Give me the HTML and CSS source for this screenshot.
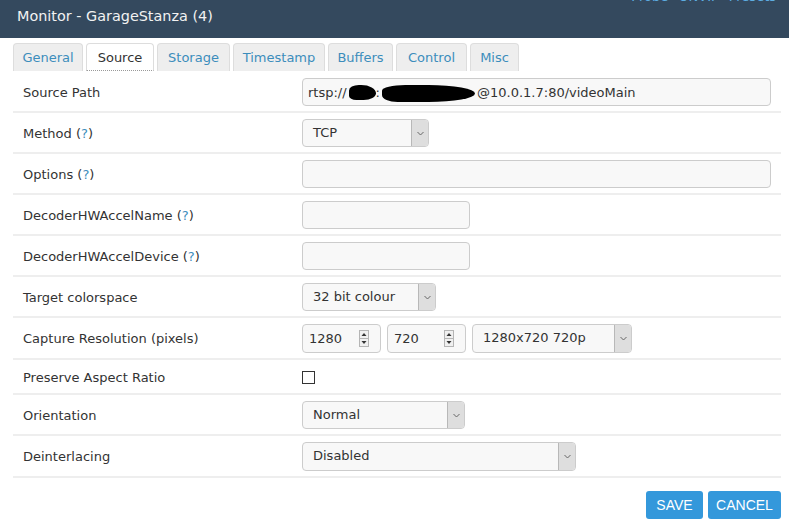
FILE: index.html
```html
<!DOCTYPE html>
<html>
<head>
<meta charset="utf-8">
<link rel="stylesheet" href="styles.css">
</head>
<body>
<div class="header">
  <div class="title">Monitor - GarageStanza (4)</div>
  <div class="links"><a>Probe</a> <a>ONVIF</a> <a>Presets</a></div>
</div>
<div class="tabs">
  <a class="tab t-general">General</a>
  <a class="tab t-source active">Source</a>
  <a class="tab t-storage">Storage</a>
  <a class="tab t-timestamp">Timestamp</a>
  <a class="tab t-buffers">Buffers</a>
  <a class="tab t-control">Control</a>
  <a class="tab t-misc">Misc</a>
</div>
<div class="form">
  <div class="row">
    <div class="label">Source Path</div>
    <div class="field"><div class="input full">rtsp://<span class="blot b1"></span>:<span class="blot b2"></span>@10.0.1.7:80/videoMain</div></div>
  </div>
  <div class="row">
    <div class="label">Method (<a class="help">?</a>)</div>
    <div class="field"><div class="select w-method"><span class="val">TCP</span><span class="arrow"><svg width="7" height="5" viewBox="0 0 7 5"><path d="M0.5 1 L3.5 4 L6.5 1" fill="none" stroke="#666" stroke-width="1"/></svg></span></div></div>
  </div>
  <div class="row">
    <div class="label">Options (<a class="help">?</a>)</div>
    <div class="field"><div class="input full"></div></div>
  </div>
  <div class="row">
    <div class="label">DecoderHWAccelName (<a class="help">?</a>)</div>
    <div class="field"><div class="input w-short"></div></div>
  </div>
  <div class="row">
    <div class="label">DecoderHWAccelDevice (<a class="help">?</a>)</div>
    <div class="field"><div class="input w-short"></div></div>
  </div>
  <div class="row">
    <div class="label">Target colorspace</div>
    <div class="field"><div class="select w-colour"><span class="val">32 bit colour</span><span class="arrow"><svg width="7" height="5" viewBox="0 0 7 5"><path d="M0.5 1 L3.5 4 L6.5 1" fill="none" stroke="#666" stroke-width="1"/></svg></span></div></div>
  </div>
  <div class="row">
    <div class="label">Capture Resolution (pixels)</div>
    <div class="field res">
      <div class="input num"><span>1280</span><span class="spin"><svg width="10" height="17" viewBox="0 0 10 17"><rect x="0.5" y="0.5" width="9" height="16" fill="#f0f0f0" stroke="#b5b5b5"/><line x1="1" y1="8.5" x2="9" y2="8.5" stroke="#b5b5b5"/><path d="M2.5 6 L5 3 L7.5 6 Z" fill="#333"/><path d="M2.5 11 L5 14 L7.5 11 Z" fill="#333"/></svg></span></div>
      <div class="input num"><span>720</span><span class="spin"><svg width="10" height="17" viewBox="0 0 10 17"><rect x="0.5" y="0.5" width="9" height="16" fill="#f0f0f0" stroke="#b5b5b5"/><line x1="1" y1="8.5" x2="9" y2="8.5" stroke="#b5b5b5"/><path d="M2.5 6 L5 3 L7.5 6 Z" fill="#333"/><path d="M2.5 11 L5 14 L7.5 11 Z" fill="#333"/></svg></span></div>
      <div class="select w-res"><span class="val">1280x720 720p</span><span class="arrow"><svg width="7" height="5" viewBox="0 0 7 5"><path d="M0.5 1 L3.5 4 L6.5 1" fill="none" stroke="#666" stroke-width="1"/></svg></span></div>
    </div>
  </div>
  <div class="row short">
    <div class="label">Preserve Aspect Ratio</div>
    <div class="field"><span class="checkbox"></span></div>
  </div>
  <div class="row">
    <div class="label">Orientation</div>
    <div class="field"><div class="select w-orient"><span class="val">Normal</span><span class="arrow"><svg width="7" height="5" viewBox="0 0 7 5"><path d="M0.5 1 L3.5 4 L6.5 1" fill="none" stroke="#666" stroke-width="1"/></svg></span></div></div>
  </div>
  <div class="row">
    <div class="label">Deinterlacing</div>
    <div class="field"><div class="select w-deint"><span class="val">Disabled</span><span class="arrow"><svg width="7" height="5" viewBox="0 0 7 5"><path d="M0.5 1 L3.5 4 L6.5 1" fill="none" stroke="#666" stroke-width="1"/></svg></span></div></div>
  </div>
</div>
<div class="buttons">
  <button class="btn b-save">SAVE</button>
  <button class="btn b-cancel">CANCEL</button>
</div>
</body>
</html>
```
FILE: styles.css
```css
* { box-sizing: border-box; }
body {
  margin: 0;
  font-family: "DejaVu Sans", Verdana, sans-serif;
  font-size: 13px;
  color: #333;
  background: #fff;
}
.header {
  height: 38px;
  background: #34495e;
  display: flex;
  justify-content: space-between;
  align-items: flex-start;
  padding: 0 13px 0 17px;
  overflow: hidden;
}
.title {
  color: #f2f2f2;
  font-size: 14.4px;
  line-height: 33px;
}
.links {
  margin-top: -10px;
  font-size: 13px;
  line-height: 14px;
  color: #5dade2;
  word-spacing: 6px;
}
.tabs {
  display: flex;
  gap: 3px;
  padding-left: 13px;
  margin-top: 5px;
  height: 28px;
}
.tab {
  display: block;
  height: 28px;
  line-height: 27px;
  text-align: center;
  background: #eeeeee;
  border: 1px solid #dddddd;
  border-bottom: none;
  border-radius: 4px 4px 0 0;
  color: #3c8dbc;
  font-size: 13px;
}
.t-general { width: 70px; }
.t-source { width: 68px; }
.t-storage { width: 73px; }
.t-timestamp { width: 92px; }
.t-buffers { width: 65px; }
.t-control { width: 71px; }
.t-misc { width: 49px; }
.tab.active {
  background: #fff;
  color: #333;
  border-bottom: 1px dotted #999;
}
.form {
  margin: 0 8px 0 13px;
  padding-top: 1px;
}
.row {
  display: flex;
  align-items: center;
  padding: 6px 0 5px;
  min-height: 41px;
  border-bottom: 2px solid #eeeeee;
}
.row.short { min-height: 35px; }
.label {
  width: 289px;
  padding-left: 10px;
  flex: none;
}
.help { color: #3c8dbc; }
.field {
  flex: 1;
  display: flex;
  align-items: center;
  gap: 6px;
}
.input {
  height: 28px;
  border: 1px solid #cccccc;
  border-radius: 4px;
  background: #f8f8f8;
  padding: 0 5px;
  display: flex;
  align-items: center;
  white-space: nowrap;
}
.input.full { width: 469px; }
.input.w-short { width: 168px; }
.input.num {
  width: 79px;
  justify-content: space-between;
  padding: 0 11px 0 6px;
}
.spin { display: flex; }
.blot {
  display: inline-block;
  background: #000;
  height: 15px;
  vertical-align: middle;
}
.b1 { width: 27px; border-radius: 40% 60% 50% 30%; margin-left: 2px; }
.b2 { width: 93px; height: 17px; border-radius: 30% 60% 60% 20% / 40% 60% 60% 50%; margin: 2px 2px 0 2px; }
.select {
  height: 28px;
  display: flex;
  border: 1px solid #cccccc;
  border-radius: 4px;
  background: #f8f8f8;
  overflow: hidden;
}
.select .val {
  flex: 1;
  padding-left: 10px;
  line-height: 26px;
  white-space: nowrap;
}
.select .arrow {
  width: 17px;
  flex: none;
  background: #dedede;
  border-left: 1px solid #b8b8b8;
  display: flex;
  align-items: center;
  justify-content: center;
}
.w-method { width: 127px; }
.w-colour { width: 134px; }
.w-res { width: 160px; height: 29px; }
.w-orient { width: 163px; }
.w-deint { width: 274px; height: 29px; }
.res { gap: 6px; }
.res .input.num { height: 29px; }
.checkbox {
  display: block;
  width: 13px;
  height: 13px;
  border: 1px solid #333;
  background: #fff;
}
.buttons {
  display: flex;
  justify-content: flex-end;
  gap: 5px;
  margin: 13px 8px 0 0;
}
.btn {
  height: 28px;
  padding: 0;
  border: none;
  border-radius: 3px;
  background: #3498db;
  color: #fff;
  font-family: "Liberation Sans", Arial, sans-serif;
  font-size: 14px;
}
.b-save { width: 57px; }
.b-cancel { width: 73px; }
```
